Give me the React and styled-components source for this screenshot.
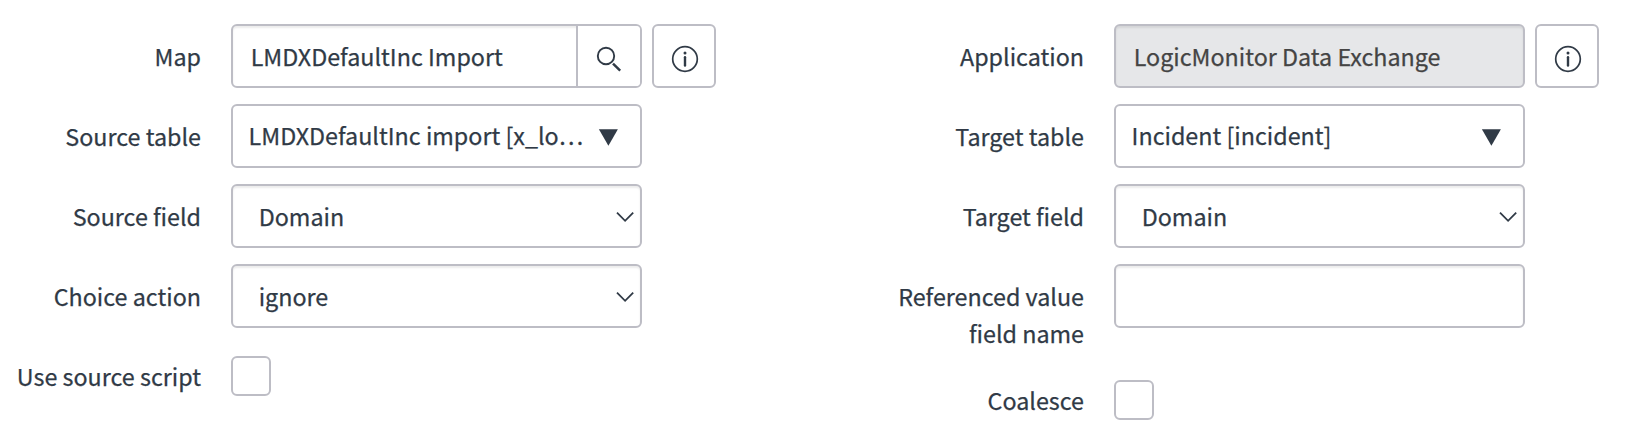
import React from "react";
import styled, { createGlobalStyle } from "styled-components";

const GlobalStyle = createGlobalStyle`
  body { margin: 0; background: #fff; }
  *, *::before, *::after { box-sizing: border-box; }
`;

const BORDER = "#bdbdc5";
const INK = "#303a46";

const Form = styled.form`
  display: flex;
  justify-content: space-between;
  width: 1626px;
  height: 446px;
  padding: 24px 27px 0 0;
  color: ${INK};
  font-family: "Noto Sans CJK SC", "Noto Sans", sans-serif;
  font-size: 23.3px;
  line-height: 37px;
  -webkit-text-stroke: 0.25px currentColor;
`;

const Column = styled.div`
  display: flex;
  flex-direction: column;
  gap: 16px;
  width: 716px;
`;

const Row = styled.div`
  display: flex;
  align-items: flex-start;
  min-height: 64px;
`;

const Label = styled.label`
  width: 201px;
  padding-top: 14px;
  margin-right: 30px;
  flex: none;
  text-align: right;
`;

const Controls = styled.div`
  display: flex;
  gap: 10px;
`;

const Field = styled.div`
  display: flex;
  align-items: center;
  width: 411px;
  height: 64px;
  border: 2px solid ${BORDER};
  border-radius: 6px;
  background: ${(p) => (p.$disabled ? "#e6e7e9" : "#fff")};
  color: ${(p) => (p.$disabled ? "#444" : "inherit")};
  box-shadow: ${(p) => (p.$flat ? "none" : "inset 0 2px 2px rgba(0, 0, 0, 0.075)")};
`;

const Value = styled.span`
  flex: 1;
  min-width: 0;
  padding-left: ${(p) => p.$indent}px;
  padding-bottom: ${(p) => p.$lift || 0}px;
  white-space: nowrap;
  overflow: hidden;
  text-overflow: ellipsis;
`;

const LookupButton = styled.span`
  display: flex;
  align-items: center;
  justify-content: center;
  width: 64px;
  height: 60px;
  padding-top: 6px;
  border-left: 2px solid ${BORDER};
  border-radius: 0 4px 4px 0;
  background: #fff;
`;

const IconButton = styled.span`
  display: flex;
  align-items: center;
  justify-content: center;
  width: 64px;
  height: 64px;
  padding: 6px 0 0 2px;
  border: 2px solid ${BORDER};
  border-radius: 6px;
`;

const Checkbox = styled.span`
  width: 40px;
  height: 40px;
  margin-top: 12px;
  border: 2px solid ${BORDER};
  border-radius: 6px;
`;

const Glyph = styled.svg`
  display: block;
  flex: none;
  margin-top: ${(p) => p.$top || 0}px;
  margin-right: ${(p) => p.$right || 0}px;
`;

const SearchIcon = () => (
  <Glyph width="26" height="26" viewBox="0 0 26 26" fill="none" stroke={INK}>
    <circle cx="10" cy="10" r="8.2" strokeWidth="1.9" />
    <path d="M17 17.7 L24.2 24.6" strokeWidth="2.5" />
  </Glyph>
);

const InfoIcon = () => (
  <Glyph width="28" height="28" viewBox="0 0 28 28" fill="none" stroke={INK}>
    <circle cx="14" cy="14" r="12.3" strokeWidth="1.7" />
    <circle cx="14" cy="8" r="1.5" fill={INK} stroke="none" />
    <path d="M14 12.2 V20.6" strokeWidth="2.4" strokeLinecap="round" />
  </Glyph>
);

const Triangle = () => (
  <Glyph $top={3} $right={22} width="20" height="17" viewBox="0 0 20 17">
    <path d="M0.9 0.2 H19.9 L10.4 16.8 Z" fill={INK} />
  </Glyph>
);

const Chevron = () => (
  <Glyph $top={1} $right={5} width="20" height="12" viewBox="0 0 20 12" fill="none" stroke={INK}>
    <path d="M2 1.7 L10.1 9.8 L18.2 1.7" strokeWidth="1.8" />
  </Glyph>
);

const InfoButton = () => (
  <IconButton>
    <InfoIcon />
  </IconButton>
);

const FormRow = ({ label, children }) => (
  <Row>
    <Label>{label}</Label>
    <Controls>{children}</Controls>
  </Row>
);

const TableSelect = ({ children }) => (
  <Field $flat>
    <Value $indent={15.6} $lift={2}>{children}</Value>
    <Triangle />
  </Field>
);

const Select = ({ children }) => (
  <Field>
    <Value $indent={25.7}>{children}</Value>
    <Chevron />
  </Field>
);

export default function App() {
  return (
    <>
      <GlobalStyle />
      <Form>
        <Column>
          <FormRow label="Map">
            <Field>
              <Value $indent={17.7}>LMDXDefaultInc Import</Value>
              <LookupButton>
                <SearchIcon />
              </LookupButton>
            </Field>
            <InfoButton />
          </FormRow>
          <FormRow label="Source table">
            <TableSelect>LMDXDefaultInc import [x_lo…</TableSelect>
          </FormRow>
          <FormRow label="Source field">
            <Select>Domain</Select>
          </FormRow>
          <FormRow label="Choice action">
            <Select>ignore</Select>
          </FormRow>
          <FormRow label="Use source script">
            <Checkbox />
          </FormRow>
        </Column>
        <Column>
          <FormRow label="Application">
            <Field $disabled>
              <Value $indent={17.7}>LogicMonitor Data Exchange</Value>
            </Field>
            <InfoButton />
          </FormRow>
          <FormRow label="Target table">
            <TableSelect>Incident [incident]</TableSelect>
          </FormRow>
          <FormRow label="Target field">
            <Select>Domain</Select>
          </FormRow>
          <FormRow label={<>Referenced value<br />field name</>}>
            <Field />
          </FormRow>
          <FormRow label="Coalesce">
            <Checkbox />
          </FormRow>
        </Column>
      </Form>
    </>
  );
}
